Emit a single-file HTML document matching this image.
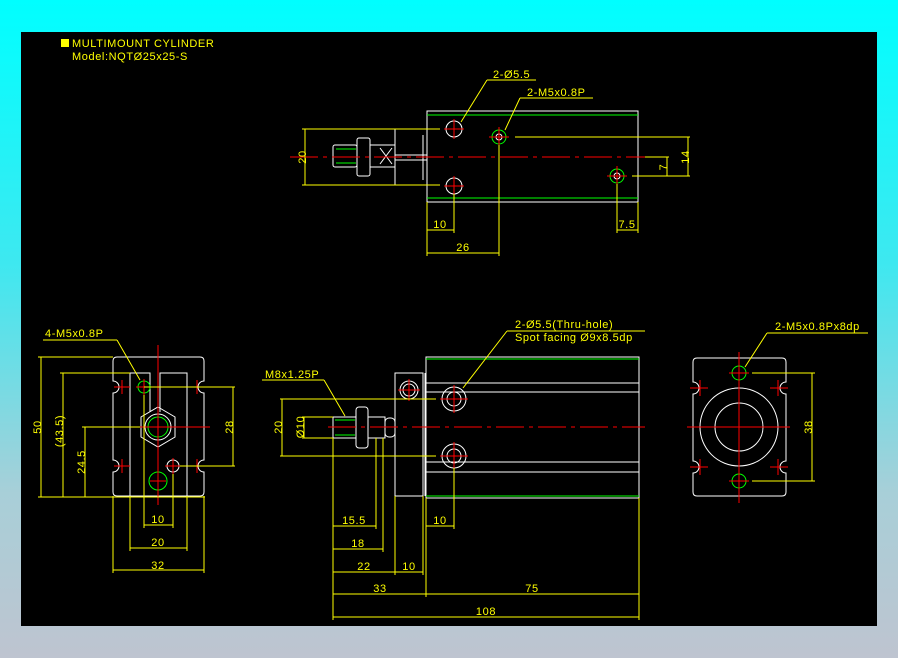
<!DOCTYPE html>
<html><head><meta charset="utf-8"><style>
html,body{margin:0;padding:0}
body{width:898px;height:658px;background:linear-gradient(#00ffff 0%,#3ee8f0 40%,#a8cfd8 75%,#bec4d0 100%);position:relative;overflow:hidden}
svg{position:absolute;left:0;top:0}
text{font-family:"Liberation Sans",sans-serif;font-size:11px;fill:#ffff00;letter-spacing:0.6px}
</style></head><body>
<svg width="898" height="658" viewBox="0 0 898 658">
<rect x="21" y="32" width="856" height="594" fill="#000"/>
<rect x="61" y="39" width="8" height="8" fill="#ffff00"/>
<text x="72" y="47">MULTIMOUNT CYLINDER</text>
<text x="72" y="60">Model:NQTØ25x25-S</text>

<g fill="none" stroke-width="1">
<!-- TOP VIEW -->
<g stroke="#fff">
<rect x="427" y="111" width="211" height="91"/>
<line x1="395" y1="129" x2="395" y2="185"/>
<line x1="423" y1="135" x2="423" y2="180"/>
<rect x="333" y="145" width="24" height="22" rx="2"/>
<rect x="357" y="138" width="13" height="38" rx="2"/>
<rect x="370" y="145" width="25" height="22"/>
<path d="M380 148 L392 164 M392 148 L380 164"/>
<line x1="395" y1="155" x2="427" y2="155"/><line x1="395" y1="160" x2="427" y2="160"/>
<circle cx="454" cy="129" r="8"/><circle cx="454" cy="186" r="8"/>
<circle cx="499" cy="137" r="3"/><circle cx="617" cy="176" r="3"/>
</g>
<g stroke="#00ff00">
<line x1="427" y1="115" x2="638" y2="115"/><line x1="427" y1="198" x2="638" y2="198"/>
<line x1="336" y1="149" x2="356" y2="149"/><line x1="336" y1="163" x2="356" y2="163"/>
<circle cx="499" cy="137" r="7"/><circle cx="617" cy="176" r="7"/>
</g>
<g stroke="#ff0000">
<line x1="290" y1="157" x2="645" y2="157" stroke-dasharray="28,5,4,5"/>
<path d="M444 129h20M454 119v20M444 186h20M454 176v20M489 137h20M499 127v20M607 176h20M617 166v20"/>
</g>
<g stroke="#ffff00">
<path d="M302 129H440M302 185H440M305 129V185"/>
<path d="M515 137H690M632 176H690M645 157H669M688 137V176M667 157V176"/>
<path d="M427 202V256M454 194V233M499 145V256M617 184V233M638 202V233"/>
<path d="M427 230H454M427 253H499M617 230H638"/>
<path d="M487 80H536M487 80L461 122M520 98H593M520 98L505 130"/>
</g>

<!-- LEFT VIEW -->
<g stroke="#fff">
<path d="M117 357H200Q204 357 204 361V381A6 6 0 0 0 204 393V460A6 6 0 0 0 204 472V492Q204 496 200 496H117Q113 496 113 492V472A6 6 0 0 0 113 460V393A6 6 0 0 0 113 381V361Q113 357 117 357Z"/>
<path d="M130 496V373H150V412M160 412V373H187V496"/>
<polygon points="158,407 175,417 175,437 158,447 141,437 141,417"/>
<circle cx="158" cy="427" r="13"/>
<circle cx="173" cy="466" r="6"/>
</g>
<g stroke="#00ff00">
<circle cx="158" cy="427" r="10"/><circle cx="144" cy="387" r="6"/><circle cx="158" cy="481" r="9"/>
</g>
<g stroke="#ff0000">
<path d="M158 345V505M107 427H210"/>
<path d="M114 387h16M122 380v14M189 387h16M197 380v14M114 466h16M122 459v14M189 466h16M197 459v14M136 387h16M144 379v16M165 466h16M173 458v16M150 481h16"/>
</g>
<g stroke="#ffff00">
<path d="M38 357H113M38 497H205M60 373H130M82 427H140M41 357V497M63 373V497M85 427V497"/>
<path d="M144 387H235M180 466H235M233 387V466"/>
<path d="M144 395V528M173 474V528M130 496V551M187 496V551M113 496V573M204 496V573M144 525H173M130 548H187M113 570H204"/>
<path d="M43 340H117M117 340L140 380"/>
</g>

<!-- MIDDLE VIEW -->
<g stroke="#fff">
<rect x="426" y="357" width="213" height="141"/>
<path d="M426 383H639M426 392H639M426 462H639M426 472H639"/>
<rect x="395" y="373" width="28" height="123"/>
<line x1="425" y1="373" x2="425" y2="496"/>
<circle cx="409" cy="390" r="9"/><circle cx="409" cy="390" r="6"/>
<circle cx="454" cy="399" r="12"/><circle cx="454" cy="399" r="7"/>
<circle cx="454" cy="456" r="12"/><circle cx="454" cy="456" r="7"/>
<rect x="333" y="417" width="23" height="21"/>
<rect x="356" y="407" width="12" height="41" rx="3"/>
<rect x="368" y="417" width="17" height="21"/>
<rect x="385" y="418" width="10" height="19" rx="4"/>
</g>
<g stroke="#00ff00">
<line x1="426" y1="359" x2="639" y2="359"/><line x1="426" y1="496" x2="639" y2="496"/>
<line x1="335" y1="420" x2="355" y2="420"/><line x1="335" y1="435" x2="355" y2="435"/>
</g>
<g stroke="#ff0000">
<line x1="328" y1="427" x2="645" y2="427" stroke-dasharray="28,5,4,5"/>
<path d="M398 390h22M409 379v22M440 399h28M454 385v28M440 456h28M454 442v28"/>
</g>
<g stroke="#ffff00">
<path d="M280 399H436M280 456H436M282 399V456M302 417H333M302 438H333M304 417V438"/>
<path d="M333 438V620M376 438V529M383 438V552M395 496V575M423 496V575M426 498V597M639 498V620M454 468V529"/>
<path d="M333 526H376M333 549H383M333 572H423M333 594H639M333 617H639M426 526H454"/>
<path d="M507 331H645M507 331L463 388M262 380H324M324 380L345 416"/>
</g>

<!-- RIGHT VIEW -->
<g stroke="#fff">
<path d="M697 358H782Q786 358 786 362V382A6 6 0 0 0 786 394V461A6 6 0 0 0 786 473V492Q786 496 782 496H697Q693 496 693 492V473A6 6 0 0 0 693 461V394A6 6 0 0 0 693 382V362Q693 358 697 358Z"/>
<circle cx="739" cy="427" r="39"/><circle cx="739" cy="427" r="24"/>
</g>
<g stroke="#00ff00"><circle cx="739" cy="373" r="7"/><circle cx="739" cy="481" r="7"/></g>
<g stroke="#ff0000">
<path d="M739 352V503M687 427H790"/>
<path d="M690 388h18M700 380v16M770 388h18M778 380v16M690 467h18M700 459v16M770 467h18M778 459v16M729 373h20M729 481h20"/>
</g>
<g stroke="#ffff00">
<path d="M752 373H815M752 481H815M812 373V481M767 333H868M767 333L745 367"/>
</g>
</g>

<g>
<text x="493" y="78">2-Ø5.5</text>
<text x="527" y="96">2-M5x0.8P</text>
<text x="300" y="163" transform="rotate(-90 300 157)" text-anchor="middle">20</text>
<text x="685" y="161" transform="rotate(-90 685 157)" text-anchor="middle">14</text>
<text x="663" y="171" transform="rotate(-90 663 167)" text-anchor="middle">7</text>
<text x="440" y="228" text-anchor="middle">10</text>
<text x="463" y="251" text-anchor="middle">26</text>
<text x="627" y="228" text-anchor="middle">7.5</text>

<text x="45" y="337">4-M5x0.8P</text>
<text x="37" y="431" transform="rotate(-90 37 427)" text-anchor="middle">50</text>
<text x="59" y="435" transform="rotate(-90 59 431)" text-anchor="middle">(43.5)</text>
<text x="81" y="466" transform="rotate(-90 81 462)" text-anchor="middle">24.5</text>
<text x="229" y="431" transform="rotate(-90 229 427)" text-anchor="middle">28</text>
<text x="158" y="523" text-anchor="middle">10</text>
<text x="158" y="546" text-anchor="middle">20</text>
<text x="158" y="569" text-anchor="middle">32</text>

<text x="515" y="328">2-Ø5.5(Thru-hole)</text>
<text x="515" y="341">Spot facing Ø9x8.5dp</text>
<text x="265" y="378">M8x1.25P</text>
<text x="278" y="431" transform="rotate(-90 278 427)" text-anchor="middle">20</text>
<text x="300" y="431" transform="rotate(-90 300 427)" text-anchor="middle">Ø10</text>
<text x="354" y="524" text-anchor="middle">15.5</text>
<text x="358" y="547" text-anchor="middle">18</text>
<text x="364" y="570" text-anchor="middle">22</text>
<text x="409" y="570" text-anchor="middle">10</text>
<text x="440" y="524" text-anchor="middle">10</text>
<text x="380" y="592" text-anchor="middle">33</text>
<text x="532" y="592" text-anchor="middle">75</text>
<text x="486" y="615" text-anchor="middle">108</text>

<text x="775" y="330">2-M5x0.8Px8dp</text>
<text x="808" y="431" transform="rotate(-90 808 427)" text-anchor="middle">38</text>
</g>
</svg>
</body></html>
